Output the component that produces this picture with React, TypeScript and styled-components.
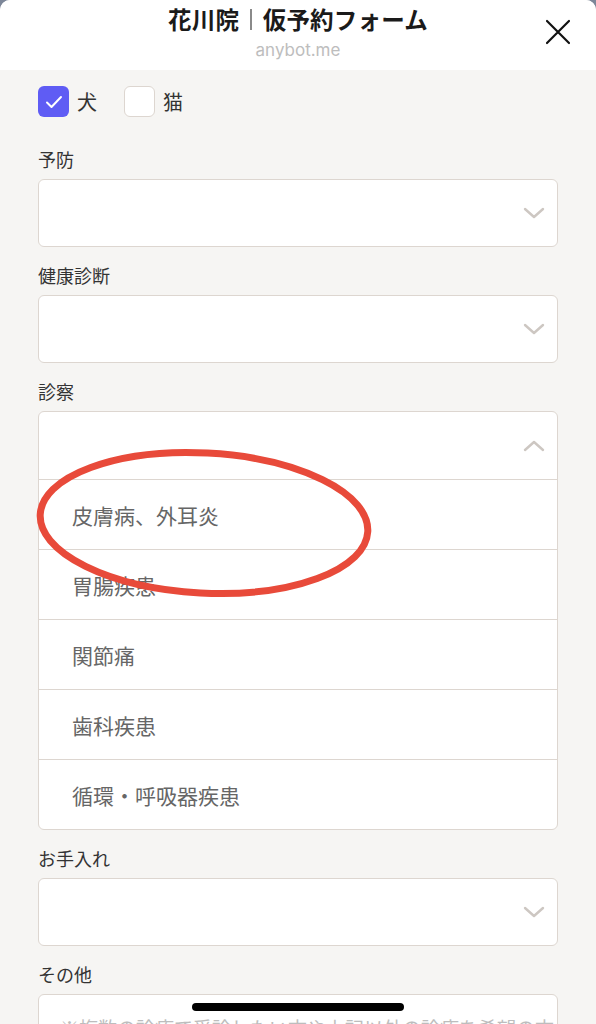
import React from "react";
import styled, { createGlobalStyle } from "styled-components";

const Global = createGlobalStyle`
  html, body { margin: 0; padding: 0; background: #7d8799; }
  body { font-family: "Noto Sans CJK JP", "Noto Sans", sans-serif; }
  * { box-sizing: border-box; }
`;

const Sheet = styled.div`
  width: 596px;
  height: 1024px;
  overflow: hidden;
  background: #f6f5f3;
  border-radius: 10px 10px 0 0;
  position: relative;
`;

const Header = styled.header`
  height: 70px;
  background: #ffffff;
  display: flex;
  flex-direction: column;
  align-items: center;
  padding-top: 3px;
  position: relative;
`;

const Title = styled.h1`
  margin: 0;
  font-size: 23.5px;
  line-height: 32px;
  font-weight: 700;
  color: #1a1a1a;
  display: flex;
  align-items: center;
  letter-spacing: 0.2px;
`;

const Bar = styled.span`
  display: inline-block;
  width: 1.5px;
  height: 21px;
  background: #8a8a8a;
  margin: 0 11px 0 11px;
`;

const Sub = styled.div`
  font-family: "Inter", "Roboto", sans-serif;
  font-size: 17px;
  line-height: 20px;
  color: #bdbdbd;
  margin-top: 5px;
`;

const Close = styled.button`
  position: absolute;
  right: 25px;
  top: 19px;
  width: 26px;
  height: 26px;
  padding: 0;
  border: 0;
  background: transparent;
  display: flex;
`;

const Body = styled.main`
  padding: 16px 38px 0 38px;
  display: flex;
  flex-direction: column;
`;

const CheckRow = styled.div`
  display: flex;
  align-items: center;
  gap: 27px;
  height: 31px;
  margin-bottom: 30px;
`;

const CheckItem = styled.label`
  display: flex;
  align-items: center;
  gap: 8px;
  font-size: 20px;
  color: #333;
`;

const Box = styled.span<{ $on?: boolean }>`
  width: 31px;
  height: 31px;
  border-radius: 6px;
  background: ${(p) => (p.$on ? "#5f5cf4" : "#ffffff")};
  border: ${(p) => (p.$on ? "none" : "1.5px solid #ddd6d0")};
  display: flex;
  align-items: center;
  justify-content: center;
`;

const Field = styled.div`
  display: flex;
  flex-direction: column;
  margin-bottom: 16px;
  position: relative;
`;

const Label = styled.div`
  font-size: 18px;
  line-height: 24px;
  color: #333;
  margin-bottom: 8px;
`;

const Select = styled.div`
  height: 68px;
  background: #fff;
  border: 1.5px solid #ddd6d0;
  border-radius: 6px;
  display: flex;
  align-items: center;
  justify-content: flex-end;
  padding-right: 12px;
`;

const Dropdown = styled.div`
  background: #fff;
  border: 1.5px solid #ddd6d0;
  border-radius: 6px;
  display: flex;
  flex-direction: column;
`;

const DropHead = styled.div`
  height: 67px;
  display: flex;
  align-items: center;
  justify-content: flex-end;
  padding-right: 12px;
`;

const Option = styled.div`
  height: 70px;
  border-top: 1.5px solid #ddd6d0;
  display: flex;
  align-items: center;
  padding-left: 33px;
  font-size: 21px;
  color: #666;
`;

const TextArea = styled.div`
  height: 90px;
  background: #fff;
  border: 1.5px solid #ddd6d0;
  border-radius: 6px;
  padding: 19px 0 0 21px;
  font-size: 19px;
  line-height: 28px;
  color: #bdbdbd;
  white-space: nowrap;
  overflow: hidden;
`;

const Annotation = styled.svg`
  position: absolute;
  left: -4px;
  top: 66px;
  pointer-events: none;
  overflow: visible;
`;

const HomeBar = styled.div`
  position: absolute;
  left: 192px;
  bottom: 13px;
  width: 212px;
  height: 8px;
  border-radius: 4px;
  background: #000;
`;

const Chevron = ({ up }: { up?: boolean }) => (
  <svg width="22" height="12" viewBox="0 0 22 12">
    <path
      d={up ? "M2 10 L11 2 L20 10" : "M2 2 L11 10 L20 2"}
      fill="none"
      stroke="#cdc7c2"
      strokeWidth="2.4"
      strokeLinecap="round"
      strokeLinejoin="round"
    />
  </svg>
);

const options = ["皮膚病、外耳炎", "胃腸疾患", "関節痛", "歯科疾患", "循環・呼吸器疾患"];

export default function App() {
  return (
    <>
      <Global />
      <Sheet>
        <Header>
          <Title>
            花川院<Bar />仮予約フォーム
          </Title>
          <Sub>anybot.me</Sub>
          <Close aria-label="close">
            <svg width="26" height="26" viewBox="0 0 26 26">
              <path d="M2 2 L24 24 M24 2 L2 24" stroke="#111" strokeWidth="2.2" strokeLinecap="round" />
            </svg>
          </Close>
        </Header>
        <Body>
          <CheckRow>
            <CheckItem>
              <Box $on>
                <svg width="18" height="14" viewBox="0 0 18 14">
                  <path d="M2 7.5 L6.5 12 L16 2" fill="none" stroke="#fff" strokeWidth="2" strokeLinecap="round" strokeLinejoin="round" />
                </svg>
              </Box>
              犬
            </CheckItem>
            <CheckItem>
              <Box />
              猫
            </CheckItem>
          </CheckRow>

          <Field>
            <Label>予防</Label>
            <Select>
              <Chevron />
            </Select>
          </Field>

          <Field>
            <Label>健康診断</Label>
            <Select>
              <Chevron />
            </Select>
          </Field>

          <Field>
            <Label>診察</Label>
            <Dropdown>
              <DropHead>
                <Chevron up />
              </DropHead>
              {options.map((o) => (
                <Option key={o}>{o}</Option>
              ))}
            </Dropdown>
            <Annotation width="350" height="160" viewBox="0 0 350 160">
              <ellipse
                cx="170"
                cy="78"
                rx="164"
                ry="70"
                fill="none"
                stroke="#e84a3a"
                strokeWidth="7"
                transform="rotate(3 170 78)"
              />
            </Annotation>
          </Field>

          <Field>
            <Label>お手入れ</Label>
            <Select>
              <Chevron />
            </Select>
          </Field>

          <Field>
            <Label>その他</Label>
            <TextArea>※複数の診療で受診したい方や上記以外の診療を希望の方</TextArea>
          </Field>
        </Body>
        <HomeBar />
      </Sheet>
    </>
  );
}
